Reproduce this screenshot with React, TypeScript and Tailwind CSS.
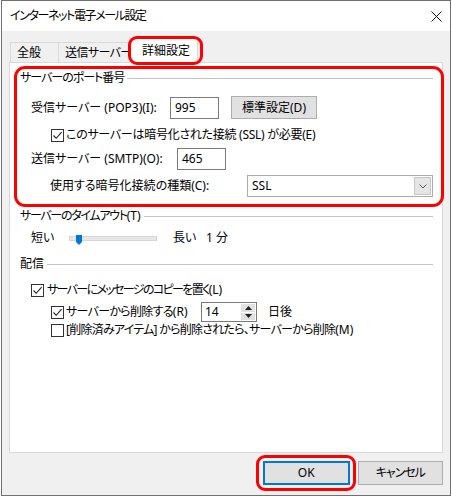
import React from "react";

const font = "font-['Noto_Sans','Noto_Sans_CJK_JP',sans-serif] [font-feature-settings:'palt']";

function Check({ checked }: { checked?: boolean }) {
  return (
    <span className="w-[13px] h-[13px] border border-[#333333] bg-white flex items-center justify-center shrink-0">
      {checked && (
        <svg width="11" height="11" viewBox="0 0 11 11">
          <path d="M1.5 5.5 L4.2 8.3 L9.6 2.2" stroke="#202020" strokeWidth="1.1" fill="none" />
        </svg>
      )}
    </span>
  );
}

function GroupLabel({ children }: { children: React.ReactNode }) {
  return (
    <div className="flex items-center h-4">
      <span className="whitespace-nowrap">{children}</span>
      <div className="flex-1 h-px bg-[#c4c4c4] ml-[3px] mr-[9px]" />
    </div>
  );
}

function TextBox({ value, w }: { value: string; w: string }) {
  return (
    <div className={`${w} h-[22px] border border-[#7a7a7a] bg-white flex items-center pl-[4px]`}>{value}</div>
  );
}

export default function App() {
  return (
    <div className={`relative w-[452px] h-[497px] bg-white overflow-hidden text-[12px] leading-4 text-black ${font}`}>
      <div className="ml-[1px] w-[450px] h-[496px] border border-[#707070] flex flex-col">
        {/* Title bar */}
        <div className="h-[30px] bg-white flex items-center pl-[8px] pr-[8px] shrink-0">
          <span className="flex-1 tracking-[-1.4px]">インターネット電子メール設定</span>
          <svg width="11" height="11" viewBox="0 0 11 11" className="mt-px">
            <path d="M0.5 0.5 L10.5 10.5 M10.5 0.5 L0.5 10.5" stroke="#111" strokeWidth="1" />
          </svg>
        </div>

        {/* Body */}
        <div className="flex-1 bg-[#f0f0f0] pl-[7px] pr-[7px] flex flex-col">
          {/* Tabs */}
          <div className="h-[31px] flex items-end pl-[1px] shrink-0">
            <div className="h-[20px] w-[49px] border border-b-0 border-[#d9d9d9] bg-[#f0f0f0] flex items-center pl-[6px]">全般</div>
            <div className="h-[20px] w-[73px] -ml-px border border-b-0 border-[#d9d9d9] bg-[#f0f0f0] flex items-center pl-[6px] whitespace-nowrap tracking-[-0.6px]">送信サーバー</div>
            <div className="relative z-10 -mb-px h-[25px] w-[69px] -ml-[2px] border border-b-0 border-[#d9d9d9] bg-white flex items-center pl-[12px] pb-[1px]">詳細設定</div>
          </div>

          {/* Tab panel */}
          <div className="h-[391px] border border-[#d9d9d9] bg-white pl-[10px] flex flex-col shrink-0">
            <div className="pt-[7px]">
              <GroupLabel><span className="tracking-[-1px]">サーバーのポート番号</span></GroupLabel>
            </div>

            <div className="mt-[10px] h-[23px] flex items-center pl-[11px]">
              <span className="w-[139px] whitespace-nowrap">受信サーバー (POP3)(I):</span>
              <TextBox value="995" w="w-[49px]" />
              <div className="ml-[12px] w-[86px] h-[23px] border border-[#adadad] bg-[#e1e1e1] flex items-center justify-center">標準設定(D)</div>
            </div>

            <div className="mt-[8px] h-4 flex items-center pl-[31px]">
              <Check checked />
              <span className="ml-[2px] whitespace-nowrap tracking-[-0.27px]">このサーバーは暗号化された接続 (SSL) が必要(E)</span>
            </div>

            <div className="mt-[5px] h-[22px] flex items-center pl-[11px]">
              <span className="w-[146px] whitespace-nowrap">送信サーバー (SMTP)(O):</span>
              <TextBox value="465" w="w-[49px]" />
            </div>

            <div className="mt-[5px] h-[22px] flex items-center pl-[30px]">
              <span className="w-[197px] whitespace-nowrap">使用する暗号化接続の種類(C):</span>
              <div className="w-[186px] h-[22px] border border-[#acacac] bg-white flex items-center p-px">
                <span className="flex-1 pl-[3px]">SSL</span>
                <div className="w-[17px] h-full bg-[#e5e5e5] border border-[#c6c6c6] flex items-center justify-center">
                  <svg width="8" height="5" viewBox="0 0 8 5">
                    <path d="M0.5 0.5 L4 4 L7.5 0.5" stroke="#555" strokeWidth="1" fill="none" />
                  </svg>
                </div>
              </div>
            </div>

            <div className="mt-[11px]">
              <GroupLabel><span className="tracking-[-1.3px]">サーバーのタイムアウト</span>(T)</GroupLabel>
            </div>

            <div className="mt-[6px] h-4 flex items-center pl-[11px]">
              <span className="w-[38px]">短い</span>
              <div className="relative w-[88px] h-[5px] bg-[#e7e7e7] border border-[#d6d6d6]">
                <svg width="6" height="10" viewBox="0 0 6 10" className="absolute left-[6px] -top-[2px]">
                  <path d="M0 0 H6 V7 L3 10 L0 7 Z" fill="#0078d7" />
                </svg>
              </div>
              <span className="ml-[16px] w-[33px]">長い</span>
              <span>1 分</span>
            </div>

            <div className="mt-[10px]">
              <GroupLabel>配信</GroupLabel>
            </div>

            <div className="mt-[10px] h-4 flex items-center pl-[11px]">
              <Check checked />
              <span className="ml-[3px] whitespace-nowrap">
                <span className="tracking-[-1.65px]">サーバーにメッセージのコピーを置く</span>(L)
              </span>
            </div>

            <div className="mt-[4px] h-[20px] flex items-center pl-[31px]">
              <div className="w-[150px] flex items-center">
                <Check checked />
                <span className="ml-[2px] whitespace-nowrap">
                  <span className="tracking-[-0.7px]">サーバーから削除する</span>(R)
                </span>
              </div>
              <div className="w-[56px] h-[20px] border border-[#7a7a7a] bg-white flex">
                <span className="flex-1 pl-[3px] flex items-center">14</span>
                <div className="w-[16px] flex flex-col gap-px p-px">
                  <div className="flex-1 bg-[#e1e1e1] flex items-center justify-center">
                    <svg width="7" height="4" viewBox="0 0 7 4"><path d="M3.5 0 L7 4 H0 Z" fill="#222" /></svg>
                  </div>
                  <div className="flex-1 bg-[#e1e1e1] flex items-center justify-center">
                    <svg width="7" height="4" viewBox="0 0 7 4"><path d="M0 0 H7 L3.5 4 Z" fill="#222" /></svg>
                  </div>
                </div>
              </div>
              <span className="ml-[11px]">日後</span>
            </div>

            <div className="h-4 flex items-center pl-[31px]">
              <Check />
              <span className="ml-[2px] whitespace-nowrap">
                <span className="tracking-[-0.75px]">[削除済みアイテム] から削除されたら、サーバーから削除</span>(M)
              </span>
            </div>
          </div>

          {/* Buttons */}
          <div className="mt-[8px] flex">
            <div className="ml-[254px] w-[87px] h-[24px] border-2 border-[#0078d7] bg-[#e1e1e1] flex items-center justify-center">OK</div>
            <div className="ml-[8px] w-[86px] h-[24px] border border-[#adadad] bg-[#e1e1e1] flex items-center justify-center tracking-[-1px]">キャンセル</div>
          </div>
        </div>
      </div>

      {/* Red annotation outlines */}
      <div className="absolute left-[128px] top-[36px] w-[75px] h-[29px] border-[3px] border-[#ff0000] rounded-[9px] z-20" />
      <div className="absolute left-[14px] top-[66px] w-[430px] h-[141px] border-[3px] border-[#ff0000] rounded-[11px] z-20" />
      <div className="absolute left-[256px] top-[455px] w-[100px] h-[36px] border-[3px] border-[#ff0000] rounded-[9px] z-20" />
    </div>
  );
}
